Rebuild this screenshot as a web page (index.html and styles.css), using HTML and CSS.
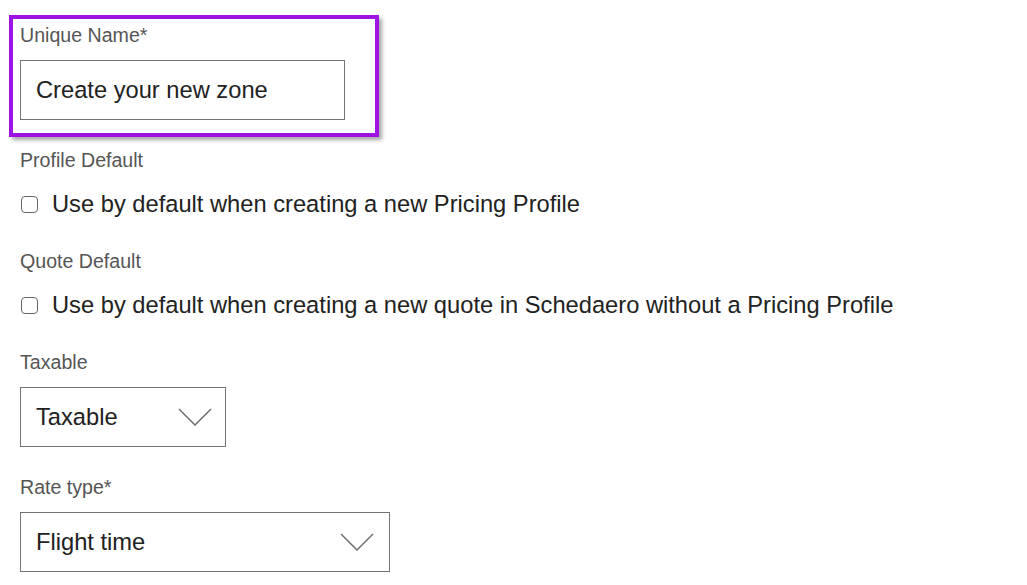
FILE: index.html
```html
<!DOCTYPE html>
<html lang="en">
<head>
  <meta charset="UTF-8" />
  <title>Zone</title>
  <link rel="stylesheet" href="styles.css">
</head>
<body>
  <div class="form">
    <div class="highlight">
      <div class="label first">Unique Name*</div>
      <input class="text-input" type="text" value="Create your new zone" />
    </div>

    <div class="label">Profile Default</div>
    <div class="check-row">
      <span class="checkbox"></span>
      <span>Use by default when creating a new Pricing Profile</span>
    </div>

    <div class="label wide">Quote Default</div>
    <div class="check-row">
      <span class="checkbox"></span>
      <span>Use by default when creating a new quote in Schedaero without a Pricing Profile</span>
    </div>

    <div class="label wide">Taxable</div>
    <div class="select small">
      <span>Taxable</span>
      <svg width="34" height="18" viewBox="0 0 34 18"><polyline points="1,1 17,17 33,1" fill="none" stroke="#666" stroke-width="1.4"/></svg>
    </div>

    <div class="label last">Rate type*</div>
    <div class="select large">
      <span>Flight time</span>
      <svg width="34" height="18" viewBox="0 0 34 18"><polyline points="1,1 17,17 33,1" fill="none" stroke="#666" stroke-width="1.4"/></svg>
    </div>
  </div>
</body>
</html>
```

FILE: styles.css
```css
body {
  margin: 0;
  background: #fff;
  font-family: "Liberation Sans", Arial, sans-serif;
  color: #222;
}

.form {
  padding: 15px 0 0 20px;
}

/* purple annotation round the first field */
.highlight {
  margin-left: -11px;
  width: 370px;
  height: 122px;
  box-sizing: border-box;
  border: 4px solid #9d13e5;
  padding: 0 0 0 7px;
  box-shadow: 3px 3px 4px rgba(0, 0, 0, 0.35);
}

.label {
  font-size: 19.6px;
  line-height: 24px;
  color: #555;
  margin-top: 11px;
}

.label.first {
  margin-top: 4px;
}

.label.wide {
  margin-top: 29px;
}

.label.last {
  margin-top: 28px;
}

.text-input {
  display: block;
  margin-top: 13px;
  width: 325px;
  height: 60px;
  box-sizing: border-box;
  border: 1px solid #747474;
  padding: 0 0 0 15px;
  font-family: "Liberation Sans", Arial, sans-serif;
  font-size: 23.7px;
  color: #222;
  outline: none;
}

.check-row {
  display: flex;
  align-items: center;
  margin-top: 16px;
  height: 32px;
  font-size: 23.7px;
  color: #222;
}

.checkbox {
  width: 17px;
  height: 17px;
  box-sizing: border-box;
  border: 1.5px solid #666;
  border-radius: 4px;
  margin: 0 14px 0 1px;
}

.select {
  display: flex;
  align-items: center;
  justify-content: space-between;
  margin-top: 13px;
  height: 60px;
  box-sizing: border-box;
  border: 1px solid #747474;
  padding: 0 13px 0 15px;
  font-size: 23.7px;
  color: #222;
}

.select.small {
  width: 206px;
}

.select.large {
  width: 370px;
  padding-right: 15px;
}
```
